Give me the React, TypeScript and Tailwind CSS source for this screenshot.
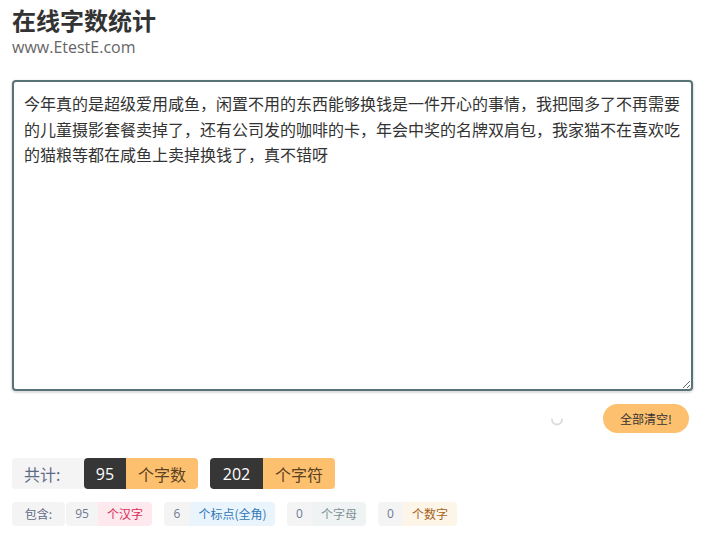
import React from "react";

const text =
  "今年真的是超级爱用咸鱼，闲置不用的东西能够换钱是一件开心的事情，我把囤多了不再需要的儿童摄影套餐卖掉了，还有公司发的咖啡的卡，年会中奖的名牌双肩包，我家猫不在喜欢吃的猫粮等都在咸鱼上卖掉换钱了，真不错呀";

const font = { fontFamily: '"Segoe UI", "Open Sans", "Noto Sans CJK SC", sans-serif' };

export default function App() {
  return (
    <div
      className="w-[706px] h-[533px] bg-white pl-3 pr-[13px] pt-1 text-[#333] overflow-hidden"
      style={{ fontFamily: '"Open Sans", "Noto Sans CJK SC", sans-serif' }}
    >
      <h1 className="text-2xl leading-8 font-bold text-[#333]" style={{ fontFamily: '"Noto Sans CJK SC", sans-serif' }}>
        在线字数统计
      </h1>
      <div className="text-base leading-5 text-[#666] mt-[1px]" style={font}>www.EtestE.com</div>

      <textarea
        defaultValue={text}
        className="block mt-[23px] w-full h-[311px] border-2 border-[#587378] rounded-[4px] shadow-[0_1px_2px_1px_rgba(0,0,0,0.13)] px-[10px] py-[9px] text-[16px] leading-[1.6] text-[#333] outline-none bg-white"
        style={{ fontFamily: '"Noto Sans CJK SC", sans-serif' }}
      />

      <div className="flex justify-end items-center mt-[13px] pr-1 h-[29px]">
        <svg width="14" height="14" viewBox="0 0 14 14" className="mr-[39px] mt-[2px]">
          <path d="M2 6.5 A5 5 0 0 0 12 6.5" fill="none" stroke="#dcdcdc" strokeWidth="2" strokeLinecap="round" />
        </svg>
        <button
          className="h-[29px] px-[17px] rounded-full bg-[#fdc06f] text-[12px] text-[#333]"
          style={{ fontFamily: '"Noto Sans CJK SC", sans-serif' }}
        >
          全部清空!
        </button>
      </div>

      <div className="flex items-center mt-[25px] h-[31px] text-[16px]" style={{ fontFamily: '"Noto Sans CJK SC", sans-serif' }}>
        <div className="h-full w-[72px] flex items-center pl-[12px] bg-[#f4f4f5] text-[#5f6b85] rounded-l-[4px]">共计:</div>
        <div className="flex h-full rounded-[4px] overflow-hidden">
          <div className="w-[42px] flex items-center justify-center bg-[#363636] text-white" style={font}>95</div>
          <div className="w-[72px] flex items-center justify-center bg-[#fdc06f] text-[#5a4322]">个字数</div>
        </div>
        <div className="flex h-full rounded-[4px] overflow-hidden ml-3">
          <div className="w-[53px] flex items-center justify-center bg-[#363636] text-white" style={font}>202</div>
          <div className="w-[72px] flex items-center justify-center bg-[#fdc06f] text-[#5a4322]">个字符</div>
        </div>
      </div>

      <div className="flex items-center mt-[13px] h-[24px] text-[12px]" style={{ fontFamily: '"Noto Sans CJK SC", sans-serif' }}>
        <div className="h-full w-[53px] flex items-center justify-center bg-[#f4f4f5] text-[#5f6b85] rounded-[4px]">包含:</div>
        <div className="flex h-full rounded-[4px] overflow-hidden ml-[1px]">
          <div className="w-[32px] flex items-center justify-center bg-[#f4f4f5] text-[#6f7a90]" style={font}>95</div>
          <div className="w-[54px] flex items-center justify-center bg-[#fde9ee] text-[#d92d5a]">个汉字</div>
        </div>
        <div className="flex h-full rounded-[4px] overflow-hidden ml-3">
          <div className="w-[26px] flex items-center justify-center bg-[#f4f4f5] text-[#6f7a90]" style={font}>6</div>
          <div className="w-[85px] flex items-center justify-center bg-[#eaf4fc] text-[#2f78b8]">个标点(全角)</div>
        </div>
        <div className="flex h-full rounded-[4px] overflow-hidden ml-3">
          <div className="w-[25px] flex items-center justify-center bg-[#f4f4f5] text-[#6f7a90]" style={font}>0</div>
          <div className="w-[54px] flex items-center justify-center bg-[#eff3f4] text-[#7d9196]">个字母</div>
        </div>
        <div className="flex h-full rounded-[4px] overflow-hidden ml-3">
          <div className="w-[25px] flex items-center justify-center bg-[#f4f4f5] text-[#6f7a90]" style={font}>0</div>
          <div className="w-[54px] flex items-center justify-center bg-[#fef5e9] text-[#a4621a]">个数字</div>
        </div>
      </div>
    </div>
  );
}
